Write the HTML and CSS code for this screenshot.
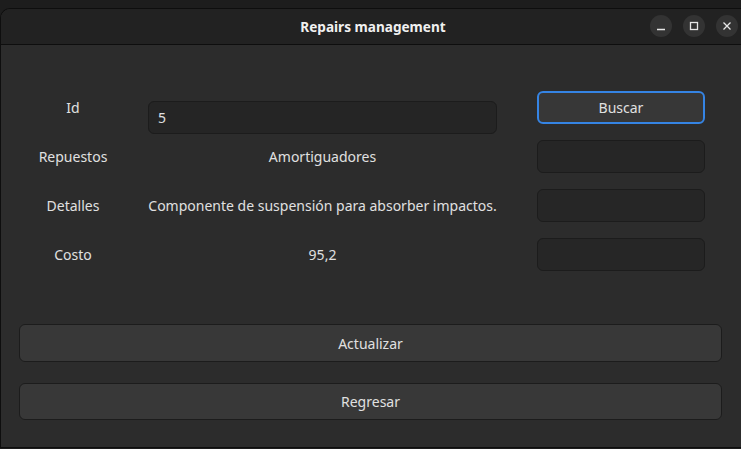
FILE: index.html
```
<!DOCTYPE html>
<html>
<head>
<meta charset="utf-8">
<link rel="stylesheet" href="styles.css">
</head>
<body>
<div class="window">
  <header class="titlebar">
    <div class="title">Repairs management</div>
    <div class="controls">
      <span class="ctl"><svg width="10" height="10" viewBox="0 0 10 10"><path d="M1 8.5h8" stroke="#e6e6e6" stroke-width="1.3"/></svg></span>
      <span class="ctl"><svg width="10" height="10" viewBox="0 0 10 10"><rect x="1.5" y="1.5" width="7" height="7" fill="none" stroke="#e6e6e6" stroke-width="1.3"/></svg></span>
      <span class="ctl"><svg width="10" height="10" viewBox="0 0 10 10"><path d="M1.5 1.5l7 7M8.5 1.5l-7 7" stroke="#e6e6e6" stroke-width="1.3"/></svg></span>
    </div>
  </header>
  <main class="content">
    <div class="form">
      <div class="label">Id</div>
      <div class="entry">5</div>
      <div class="btn focus">Buscar</div>

      <div class="label">Repuestos</div>
      <div class="value">Amortiguadores</div>
      <div class="box"></div>

      <div class="label">Detalles</div>
      <div class="value">Componente de suspensión para absorber impactos.</div>
      <div class="box"></div>

      <div class="label">Costo</div>
      <div class="value">95,2</div>
      <div class="box"></div>
    </div>
    <div class="actions">
      <div class="wide">Actualizar</div>
      <div class="wide short">Regresar</div>
    </div>
  </main>
</div>
</body>
</html>
```
FILE: styles.css
```
html, body {
  margin: 0;
  padding: 0;
  background: #1d1d1d;
  width: 741px;
  height: 449px;
  overflow: hidden;
  font-family: "Noto Sans", "Open Sans", sans-serif;
  font-size: 14px;
  color: #e0e0e0;
}
.window {
  margin-top: 8px;
  height: 438px;
  border-top: 1px solid #0e0e0e;
  border-left: 1px solid #0e0e0e;
  border-bottom: 1px solid #0e0e0e;
  border-radius: 10px 0 0 0;
  background: #2c2c2c;
  display: flex;
  flex-direction: column;
  overflow: hidden;
}
.titlebar {
  height: 35px;
  background: #222222;
  border-bottom: 1px solid #0e0e0e;
  display: flex;
  align-items: center;
  justify-content: center;
  position: relative;
  flex: none;
}
.title {
  font-weight: bold;
  font-size: 13.6px;
  color: #f0f0f0;
  margin-left: 4px;
}
.controls {
  position: absolute;
  right: 3px;
  top: 6px;
  display: flex;
  gap: 11px;
}
.ctl {
  width: 22px;
  height: 22px;
  border-radius: 50%;
  background: #333333;
  display: flex;
  align-items: center;
  justify-content: center;
}
.content {
  flex: 1;
  padding: 46px 18px 0 18px;
  display: flex;
  flex-direction: column;
}
.form {
  display: grid;
  grid-template-columns: 108px 349px 187px;
  grid-auto-rows: 33px;
  column-gap: 21px;
  row-gap: 16px;
  align-items: center;
}
.form > .btn, .form > .box { margin-left: 19px; }
.label {
  text-align: center;
}
.value {
  text-align: center;
  white-space: nowrap;
}
.entry {
  height: 33px;
  margin-top: 10px;
  margin-bottom: -10px;
  border: 1px solid #1c1c1c;
  border-radius: 6px;
  background: #252525;
  display: flex;
  align-items: center;
  padding-left: 9px;
  box-sizing: border-box;
}
.btn {
  height: 33px;
  box-sizing: border-box;
  border-radius: 6px;
  background: #373737;
  display: flex;
  align-items: center;
  justify-content: center;
}
.btn.focus {
  border: 2px solid #3584e4;
}
.box {
  height: 33px;
  box-sizing: border-box;
  border: 1px solid #1c1c1c;
  border-radius: 6px;
  background: #262626;
}
.actions {
  margin-top: 53px;
  display: flex;
  flex-direction: column;
  gap: 21px;
}
.wide {
  height: 38px;
  box-sizing: border-box;
  border: 1px solid #1c1c1c;
  border-radius: 6px;
  background: #383838;
  display: flex;
  align-items: center;
  justify-content: center;
  width: 703px;
}
.wide.short { height: 37px; }
```
